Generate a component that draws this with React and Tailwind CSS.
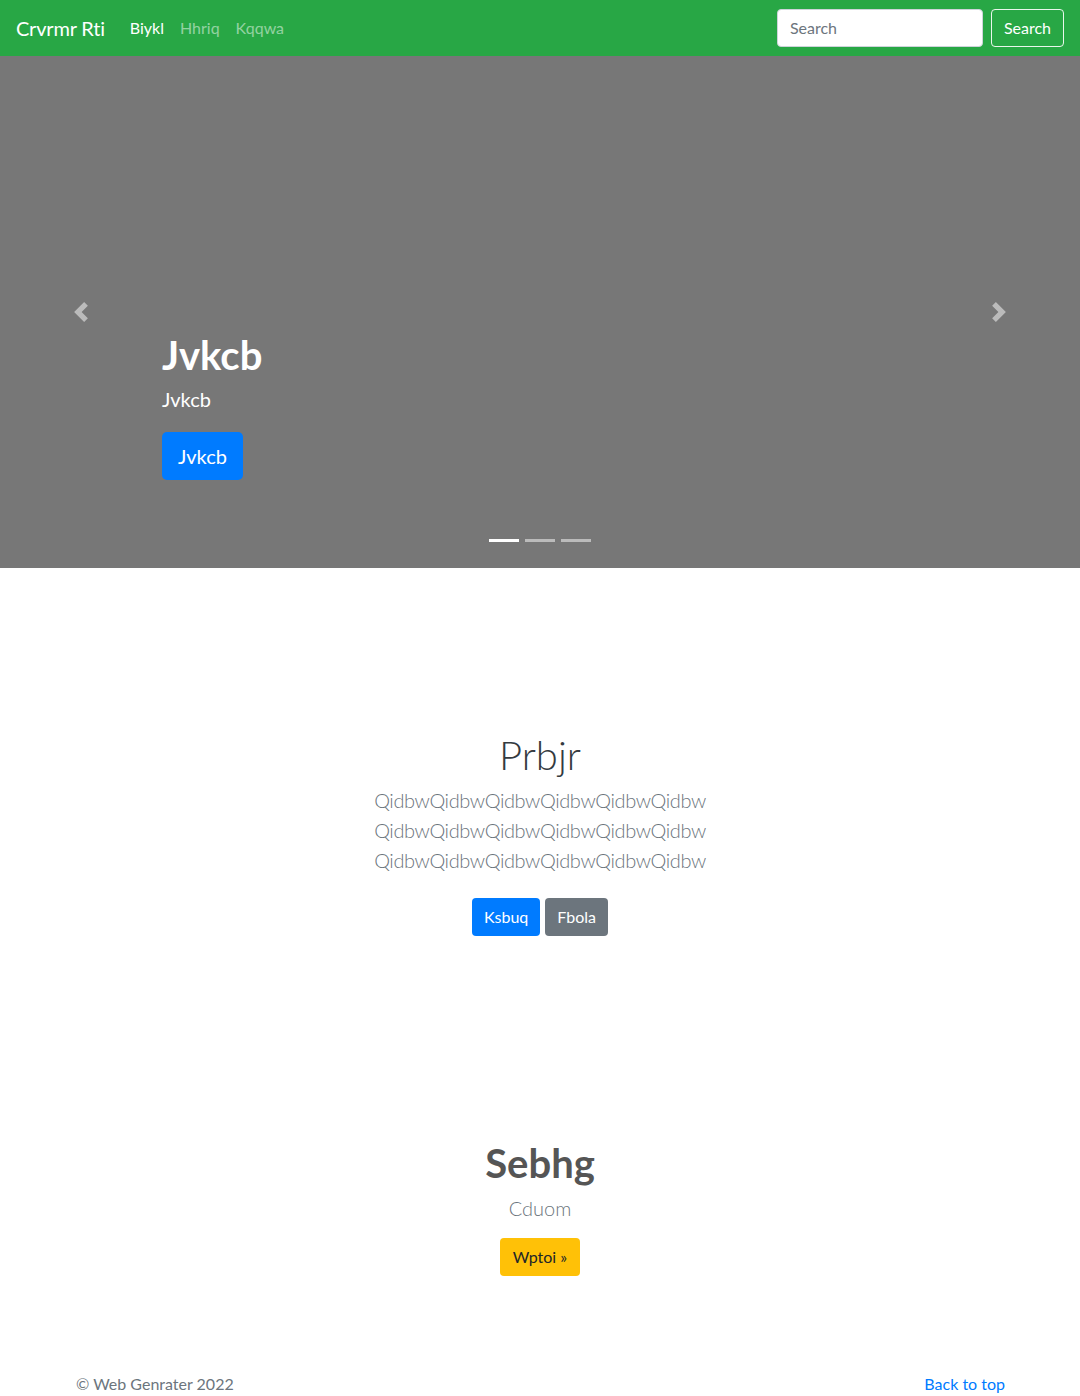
import React from 'react';

const font = { fontFamily: 'Lato, "Noto Sans", sans-serif' };

const Chevron = ({ dir }) => (
  <svg width="20" height="20" viewBox="0 0 8 8" fill="#fff" className="opacity-50">
    {dir === 'left' ? (
      <path d="M5.25 0l-4 4 4 4 1.5-1.5L4.25 4l2.5-2.5L5.25 0z" />
    ) : (
      <path d="M2.75 0l-1.5 1.5L3.75 4l-2.5 2.5L2.75 8l4-4-4-4z" />
    )}
  </svg>
);

const App = () => {
  return (
    <div className="min-h-screen bg-white text-[#212529]" style={font}>
      {/* Navbar */}
      <nav className="h-14 bg-[#28a745] flex items-center px-4">
        <span className="text-white text-[20px] mr-[25px] tracking-[-0.2px]">Crvrmr Rti</span>
        <div className="flex items-center gap-4 text-[16px]">
          <span className="text-white">Biykl</span>
          <span className="text-white/50">Hhriq</span>
          <span className="text-white/50">Kqqwa</span>
        </div>
        <div className="ml-auto flex items-center gap-2">
          <div className="w-[206px] h-[38px] bg-white border border-[#ced4da] rounded flex items-center px-3 text-[16px] text-[#6c757d]">
            Search
          </div>
          <button className="h-[38px] px-3 border border-white/90 rounded text-white text-[16px]">Search</button>
        </div>
      </nav>

      {/* Carousel */}
      <section className="relative h-[512px] bg-[#777] flex items-end px-[162px] pb-[88px]">
        <div className="absolute left-0 top-0 h-full w-[162px] flex items-center justify-center">
          <Chevron dir="left" />
        </div>
        <div className="absolute right-0 top-0 h-full w-[162px] flex items-center justify-center">
          <Chevron dir="right" />
        </div>
        <div className="text-white">
          <h1 className="text-[40px] font-bold leading-[48px] mb-[5px]">Jvkcb</h1>
          <p className="text-[20px] leading-[30px] mb-[18px]">Jvkcb</p>
          <button className="bg-[#007bff] text-white text-[20px] h-12 px-4 rounded-[5px]">Jvkcb</button>
        </div>
        <div className="absolute bottom-[26px] left-0 right-0 flex justify-center gap-[6px]">
          <span className="w-[30px] h-[3px] bg-white" />
          <span className="w-[30px] h-[3px] bg-white/50" />
          <span className="w-[30px] h-[3px] bg-white/50" />
        </div>
      </section>

      {/* Jumbotron */}
      <section className="flex flex-col items-center text-center pt-[163px]">
        <h1 className="text-[40px] font-light leading-[48px] text-[#343a40] mb-[6px]">Prbjr</h1>
        <p className="text-[20px] font-light leading-[30px] text-[#6c757d] w-[340px] tracking-[-0.4px]">
          QidbwQidbwQidbwQidbwQidbwQidbw QidbwQidbwQidbwQidbwQidbwQidbw QidbwQidbwQidbwQidbwQidbwQidbw
        </p>
        <div className="flex gap-[5px] mt-[23px]">
          <button className="h-[38px] px-3 bg-[#007bff] text-white text-[16px] rounded">Ksbuq</button>
          <button className="h-[38px] px-3 bg-[#6c757d] text-white text-[16px] rounded">Fbola</button>
        </div>
      </section>

      {/* Feature */}
      <section className="flex flex-col items-center text-center pt-[203px]">
        <h2 className="text-[40px] font-bold leading-[48px] text-[#555]">Sebhg</h2>
        <p className="text-[20px] font-light leading-[30px] text-[#6c757d] mt-[6px]">Cduom</p>
        <button className="mt-[15px] h-[38px] px-[13px] bg-[#ffc107] text-[#212529] text-[16px] rounded">Wptoi »</button>
      </section>

      {/* Footer */}
      <footer className="flex justify-between px-[76px] pt-[96px] text-[16px] leading-6">
        <span className="text-[#6c757d]">© Web Genrater 2022</span>
        <span className="text-[#007bff] mr-[-1px]">Back to top</span>
      </footer>
    </div>
  );
};

export default App;
